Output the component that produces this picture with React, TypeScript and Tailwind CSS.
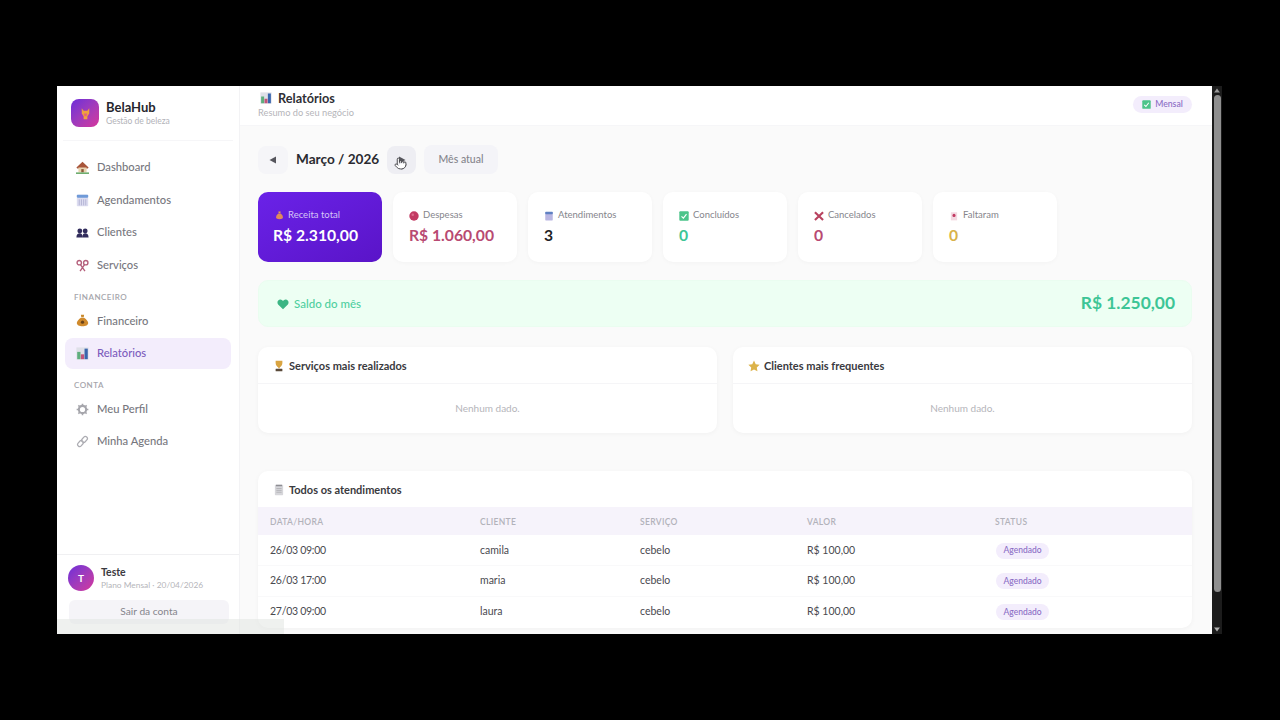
import React from 'react';
import { Pointer } from 'lucide-react';

type IconProps = { className?: string };

const HouseIcon = ({ className }: IconProps) => (
  <svg viewBox="0 0 16 16" className={className}>
    <path d="M8 1 15.500 8l-1 1.200H1.500L.5 8z" fill="#a8553a" />
    <rect x="3" y="8" width="10" height="6" fill="#e8d3b0" />
    <rect x="6.500" y="10" width="3" height="4" fill="#8a5a3a" />
    <path d="M0 14h16v2H0z" fill="#6fae6f" />
  </svg>
);

const CalendarIcon = ({ className }: IconProps) => (
  <svg viewBox="0 0 16 16" className={className}>
    <rect x="1" y="1" width="14" height="14" rx="1" fill="#dcdcf0" />
    <rect x="1" y="1" width="14" height="3.500" rx="1" fill="#6f9ad8" />
    <path d="M4 6.500V14M6.700 6.500V14M9.400 6.500V14M12 6.500V14" stroke="#a9a9cc" strokeWidth="0.900" />
  </svg>
);

const UsersEmojiIcon = ({ className }: IconProps) => (
  <svg viewBox="0 0 16 16" className={className}>
    <circle cx="4.700" cy="6" r="3" fill="#312c5c" />
    <circle cx="11.300" cy="6" r="3" fill="#312c5c" />
    <path d="M.5 14c0-3.500 1.800-5 4.200-5s3.300 1.500 3.300 5zM8 14c0-3.500.9-5 3.300-5s4.200 1.500 4.200 5z" fill="#312c5c" />
  </svg>
);

const ScissorsIcon = ({ className }: IconProps) => (
  <svg viewBox="0 0 16 16" className={className} fill="none" stroke="#b5607c" strokeWidth="1.700">
    <circle cx="4" cy="4.500" r="2.700" />
    <circle cx="12" cy="4.500" r="2.700" />
    <path d="M5.500 6.800 11 15M10.500 6.800 5 15" />
  </svg>
);

const MoneyBagIcon = ({ className }: IconProps) => (
  <svg viewBox="0 0 16 16" className={className}>
    <path d="M6 1h4L9.500 4h-3z" fill="#c98a2e" />
    <path d="M6 4.500h4c3 2 5 4.500 5 6.500 0 2.500-3 4-7 4s-7-1.500-7-4c0-2 2-4.500 5-6.500z" fill="#d08a2c" />
    <circle cx="8" cy="10" r="2" fill="#6b4318" />
  </svg>
);

const ChartIcon = ({ className }: IconProps) => (
  <svg viewBox="0 0 16 16" className={className}>
    <rect x="0.500" y="0.500" width="15" height="15" fill="#dfe0e8" />
    <rect x="1.500" y="6" width="4" height="9" fill="#5fae7d" />
    <rect x="6" y="9" width="4" height="6" fill="#c2557a" />
    <rect x="10.500" y="2" width="4" height="13" fill="#3a66ad" />
  </svg>
);

const GearIcon = ({ className }: IconProps) => (
  <svg viewBox="0 0 16 16" className={className}>
    <circle cx="8" cy="8" r="4.500" fill="none" stroke="#a6a6ac" strokeWidth="2.600" />
    <path d="M8 .8v3M8 12.200v3M.8 8h3M12.200 8h3M2.900 2.900l2.100 2.100M11 11l2.100 2.100M13.100 2.900 11 5M5 11l-2.100 2.100" stroke="#a6a6ac" strokeWidth="1.900" />
  </svg>
);

const LinkIcon = ({ className }: IconProps) => (
  <svg viewBox="0 0 16 16" className={className} fill="none" stroke="#acacb2" strokeWidth="1.500">
    <rect x="8" y="1.500" width="5" height="8" rx="2.500" transform="rotate(42 10.500 5.500)" />
    <rect x="3" y="6.500" width="5" height="8" rx="2.500" transform="rotate(42 5.500 10.500)" />
  </svg>
);

const FoxLogo = ({ className }: IconProps) => (
  <svg viewBox="0 0 16 16" className={className}>
    <path d="M4 2.500 6 5h4l2-2.500V8l-2 3v3H6v-3L4 8z" fill="#f0a33c" />
    <path d="M6 8h4l-1 3H7z" fill="#e8637a" />
  </svg>
);

const BagIcon = ({ className }: IconProps) => (
  <svg viewBox="0 0 16 16" className={className}>
    <path d="M6 1h4L9.500 4h-3z" fill="#e6a04d" />
    <path d="M6 4.500h4c3 2 4 4.500 4 6.500 0 2.500-2.500 3.500-6 3.500S2 13.500 2 11c0-2 1-4.500 4-6.500z" fill="#e08a5a" />
  </svg>
);

const RedDot = ({ className }: IconProps) => (
  <svg viewBox="0 0 16 16" className={className}>
    <circle cx="8" cy="8" r="7.500" fill="#c23a62" />
    <circle cx="6" cy="6" r="2" fill="#dd6d8d" />
  </svg>
);

const TearCalendar = ({ className }: IconProps) => (
  <svg viewBox="0 0 16 16" className={className}>
    <rect x="2" y="3" width="12" height="12" rx="1" fill="#b9b6e2" />
    <rect x="2" y="1" width="12" height="4" rx="1" fill="#5f80c2" />
  </svg>
);

const CheckBox = ({ className }: IconProps) => (
  <svg viewBox="0 0 16 16" className={className}>
    <rect x="0.500" y="0.500" width="15" height="15" rx="1.500" fill="#4cc48a" />
    <path d="M4 8.500 7 11.500 12 5" fill="none" stroke="#fff" strokeWidth="1.800" />
  </svg>
);

const CrossIcon = ({ className }: IconProps) => (
  <svg viewBox="0 0 16 16" className={className}>
    <path d="M1.500 2 14.500 14.500M14.500 2 1.500 14.500" stroke="#b8425f" strokeWidth="3.400" />
  </svg>
);

const PinIcon = ({ className }: IconProps) => (
  <svg viewBox="0 0 16 16" className={className}>
    <rect x="3" y="2" width="10" height="13" fill="#f3d9e2" />
    <circle cx="8" cy="7" r="2.500" fill="#c23a62" />
  </svg>
);

const GreenHeart = ({ className }: IconProps) => (
  <svg viewBox="0 0 16 16" className={className}>
    <path d="M8 15 1.500 8.500C-.5 6 1 2 4.500 2 6 2 7.300 3 8 4c.7-1 2-2 3.500-2C15 2 16.500 6 14.500 8.500z" fill="#3bb583" />
  </svg>
);

const TrophyIcon = ({ className }: IconProps) => (
  <svg viewBox="0 0 16 16" className={className}>
    <path d="M3.500 1h9v3c0 3-2 5-3.500 5.500V11H7V9.500C5.500 9 3.500 7 3.500 4z" fill="#d9a441" />
    <rect x="3.500" y="11.500" width="9" height="3.500" rx="0.500" fill="#5a4a3a" />
  </svg>
);

const StarIcon = ({ className }: IconProps) => (
  <svg viewBox="0 0 16 16" className={className}>
    <path d="M8 .8l2.300 4.800 5.200.7-3.800 3.600.9 5.200L8 12.600l-4.600 2.500.9-5.200L.5 6.300l5.200-.7z" fill="#dcb34a" />
  </svg>
);

const NoteIcon = ({ className }: IconProps) => (
  <svg viewBox="0 0 16 16" className={className}>
    <rect x="2.500" y="1" width="11" height="14" rx="1" fill="#d6d6da" />
    <rect x="4" y="1" width="8" height="2" fill="#8d8d92" />
    <path d="M4.500 6h7M4.500 8.500h7M4.500 11h7" stroke="#a5a5aa" strokeWidth="0.900" />
  </svg>
);

const NavItem = ({ icon, label, active }: { icon: React.ReactNode; label: string; active?: boolean }) => (
  <div
    className={`flex h-[31px] items-center gap-[8px] rounded-[8px] px-[11px] text-[11.200px] font-medium ${
      active ? 'bg-[#f3edfc] text-[#7c5cbc]' : 'text-[#77777e]'
    }`}
  >
    {icon}
    <span>{label}</span>
  </div>
);

const StatCard = ({
  icon,
  label,
  value,
  valueClass,
}: {
  icon: React.ReactNode;
  label: string;
  value: string;
  valueClass: string;
}) => (
  <div className="flex h-[70px] w-[124px] flex-col rounded-[10px] bg-white pl-[16px] pt-[17px] shadow-[0_1px_4px_rgba(0,0,0,0.03)]">
    <div className="flex h-[13px] items-center gap-[4px] text-[9.500px] text-[#85858c]">
      {icon}
      <span>{label}</span>
    </div>
    <div className={`mt-[2px] text-[15.700px] leading-[22px] font-bold ${valueClass}`}>{value}</div>
  </div>
);

const TopPanel = ({ icon, title }: { icon: React.ReactNode; title: string }) => (
  <div className="h-[86px] flex-1 rounded-[10px] bg-white shadow-[0_1px_5px_rgba(0,0,0,0.04)]">
    <div className="flex h-[37px] items-center gap-[4px] border-b border-[#f5f5f7] pl-[15px] pt-[2px] text-[11px] font-bold text-[#3a3a40]">
      {icon}
      <span>{title}</span>
    </div>
    <div className="pt-[17px] text-center text-[10px] text-[#b5b5ba]">Nenhum dado.</div>
  </div>
);

const rows = [
  { when: '26/03 09:00', client: 'camila' },
  { when: '26/03 17:00', client: 'maria' },
  { when: '27/03 09:00', client: 'laura' },
];

export default function App() {
  return (
    <div className="flex h-screen flex-col overflow-hidden bg-black pb-[86px] pl-[57px] pr-[58px] pt-[86px] font-['Lato','Noto_Sans',sans-serif]">
      <div className="relative flex h-[548px] min-h-0 bg-white">
        {/* Sidebar */}
        <aside className="flex w-[183px] shrink-0 flex-col border-r border-[#f3f3f5] bg-white">
          <div className="mx-[6px] flex h-[55px] shrink-0 items-center gap-[7px] border-b border-[#f6f6f8] pl-[8px]">
            <div className="flex h-[28px] w-[28px] items-center justify-center rounded-[8px] bg-gradient-to-br from-[#6d28d9] to-[#d6339b]">
              <FoxLogo className="h-[15px] w-[15px]" />
            </div>
            <div>
              <div className="text-[13px] leading-[15px] font-bold text-[#26262c]">BelaHub</div>
              <div className="text-[8.500px] leading-[12px] text-[#b2b2b8]">Gestão de beleza</div>
            </div>
          </div>
          <nav className="flex flex-1 flex-col gap-[1.700px] px-[8px] pt-[11px]">
            <NavItem icon={<HouseIcon className="h-[13px] w-[13px]" />} label="Dashboard" />
            <NavItem icon={<CalendarIcon className="h-[13px] w-[13px]" />} label="Agendamentos" />
            <NavItem icon={<UsersEmojiIcon className="h-[13px] w-[13px]" />} label="Clientes" />
            <NavItem icon={<ScissorsIcon className="h-[13px] w-[13px]" />} label="Serviços" />
            <div className="h-[21px] pl-[9px] pt-[8px] text-[8px] leading-[12px] font-semibold tracking-[0.06em] text-[#a5a5ab]">FINANCEIRO</div>
            <NavItem icon={<MoneyBagIcon className="h-[13px] w-[13px]" />} label="Financeiro" />
            <NavItem icon={<ChartIcon className="h-[13px] w-[13px]" />} label="Relatórios" active />
            <div className="h-[21px] pl-[9px] pt-[8px] text-[8px] leading-[12px] font-semibold tracking-[0.06em] text-[#a5a5ab]">CONTA</div>
            <NavItem icon={<GearIcon className="h-[13px] w-[13px]" />} label="Meu Perfil" />
            <NavItem icon={<LinkIcon className="h-[13px] w-[13px]" />} label="Minha Agenda" />
          </nav>
          <div className="flex h-[80px] shrink-0 flex-col border-t border-[#f0f0f2] px-[11px] pt-[10px]">
            <div className="flex items-center gap-[7px]">
              <div className="flex h-[26px] w-[26px] items-center justify-center rounded-full bg-gradient-to-br from-[#6d28d9] to-[#d6339b] text-[10px] font-bold text-white">T</div>
              <div>
                <div className="text-[10.500px] leading-[13px] font-bold text-[#3a3a40]">Teste</div>
                <div className="text-[8.400px] leading-[12px] text-[#b5b5ba]">Plano Mensal · 20/04/2026</div>
              </div>
            </div>
            <div className="ml-[1px] mt-[9px] flex h-[24px] w-[160px] items-center justify-center rounded-[6px] bg-[#f5f4f8] text-[10.200px] text-[#85858c]">Sair da conta</div>
          </div>
        </aside>

        {/* Main */}
        <main className="flex min-w-0 flex-1 flex-col overflow-hidden bg-[#fafafa]">
          <header className="flex h-[40px] shrink-0 items-center justify-between border-b border-[#f6f6f8] bg-white pl-[18px] pr-[20px]">
            <div className="pb-[3px]">
              <div className="flex items-center gap-[6px] pl-[2px] text-[12.700px] leading-[16px] font-bold text-[#2f2f35]">
                <ChartIcon className="h-[12px] w-[12px]" />
                <span>Relatórios</span>
              </div>
              <div className="text-[9.250px] leading-[13px] text-[#b5b5ba]">Resumo do seu negócio</div>
            </div>
            <div className="mb-[3px] flex h-[17px] w-[59px] items-center justify-center gap-[4px] rounded-full bg-[#f3edfc] text-[8.700px] font-medium text-[#8a6cc4]">
              <CheckBox className="h-[9px] w-[9px]" />
              <span>Mensal</span>
            </div>
          </header>

          <div className="flex flex-col pl-[18px] pr-[20px] pt-[19px]">
            {/* Month navigation */}
            <div className="flex h-[29px] items-center">
              <div className="flex h-[28px] w-[30px] items-center justify-center rounded-[8px] bg-[#f5f5f8]">
                <svg viewBox="0 0 8 8" className="h-[8px] w-[8px]"><path d="M7 .5v7L.5 4z" fill="#55555c" /></svg>
              </div>
              <div className="ml-[8px] w-[91px] text-[13.600px] font-bold whitespace-nowrap text-[#2a2a30]">Março / 2026</div>
              <div className="relative flex h-[28px] w-[29px] items-center justify-center rounded-[8px] bg-[#eeeef3]">
                <svg viewBox="0 0 8 8" className="h-[8px] w-[8px]"><path d="M1 .5v7L7.500 4z" fill="#55555c" /></svg>
                <Pointer className="absolute left-[7px] top-[11px] h-[13px] w-[13px] fill-white text-[#45454a]" strokeWidth={1.800} />
              </div>
              <div className="ml-[8px] flex h-[29px] w-[74px] items-center justify-center rounded-[8px] bg-[#f4f4f8] text-[10.500px] font-medium text-[#85858c]">Mês atual</div>
            </div>

            {/* Stat cards */}
            <div className="mt-[18px] flex gap-[11px]">
              <div className="flex h-[70px] w-[124px] flex-col rounded-[10px] bg-gradient-to-br from-[#6a22e8] to-[#5a14c8] pl-[15px] pt-[17px]">
                <div className="flex h-[13px] items-center gap-[4px] pl-[2px] text-[9.500px] text-[#d7c4f7]">
                  <BagIcon className="h-[9px] w-[9px]" />
                  <span>Receita total</span>
                </div>
                <div className="mt-[2px] text-[15.700px] leading-[22px] font-bold text-white">R$ 2.310,00</div>
              </div>
              <StatCard icon={<RedDot className="h-[10px] w-[10px]" />} label="Despesas" value="R$ 1.060,00" valueClass="text-[#b84a72]" />
              <StatCard icon={<TearCalendar className="h-[10px] w-[10px]" />} label="Atendimentos" value="3" valueClass="text-[#1f1f25]" />
              <StatCard icon={<CheckBox className="h-[10px] w-[10px]" />} label="Concluídos" value="0" valueClass="text-[#3dc596]" />
              <StatCard icon={<CrossIcon className="h-[10px] w-[10px]" />} label="Cancelados" value="0" valueClass="text-[#b84a72]" />
              <StatCard icon={<PinIcon className="h-[10px] w-[10px]" />} label="Faltaram" value="0" valueClass="text-[#d9b34a]" />
            </div>

            {/* Balance */}
            <div className="mt-[18px] flex h-[47px] items-center justify-between rounded-[10px] border border-[#eafdf0] bg-[#edfff3] pl-[18px] pr-[16px]">
              <div className="flex items-center gap-[5px] text-[11.500px] font-medium text-[#4fcf9f]">
                <GreenHeart className="h-[12px] w-[12px]" />
                <span>Saldo do mês</span>
              </div>
              <div className="text-[17.400px] font-bold text-[#3dc596]">R$ 1.250,00</div>
            </div>

            {/* Top lists */}
            <div className="mt-[20px] flex gap-[16px]">
              <TopPanel icon={<TrophyIcon className="h-[12px] w-[12px]" />} title="Serviços mais realizados" />
              <TopPanel icon={<StarIcon className="h-[12px] w-[12px]" />} title="Clientes mais frequentes" />
            </div>

            {/* Appointments */}
            <div className="mt-[38px] h-[157px] shrink-0 overflow-hidden rounded-[10px] bg-white shadow-[0_1px_5px_rgba(0,0,0,0.04)]">
              <div className="flex h-[36px] items-center gap-[4px] pl-[15px] pt-[2px] text-[11px] font-bold text-[#3a3a40]">
                <NoteIcon className="h-[12px] w-[12px]" />
                <span>Todos os atendimentos</span>
              </div>
              <table className="w-full table-fixed border-collapse">
                <thead>
                  <tr className="h-[28px] bg-[#f6f3fb] text-left text-[8.500px] tracking-[0.04em] text-[#b2b2ba]">
                    <th className="w-[222px] pl-[12px] pt-[2px] font-semibold">DATA/HORA</th>
                    <th className="w-[160px] pt-[2px] font-semibold">CLIENTE</th>
                    <th className="w-[167px] pt-[2px] font-semibold">SERVIÇO</th>
                    <th className="w-[188px] pt-[2px] font-semibold">VALOR</th>
                    <th className="pt-[2px] font-semibold">STATUS</th>
                  </tr>
                </thead>
                <tbody>
                  {rows.map((row) => (
                    <tr key={row.when} className="h-[30.500px] border-b border-[#f9f9fa] text-[10.500px] text-[#4a4a50] last:border-b-0">
                      <td className="pl-[12px] pt-[1px] tracking-[-0.025em]">{row.when}</td>
                      <td className="pt-[1px]">{row.client}</td>
                      <td className="pt-[1px]">cebelo</td>
                      <td className="pt-[1px]">R$ 100,00</td>
                      <td className="pt-[1px]">
                        <span className="ml-[1px] inline-flex h-[16px] w-[53px] items-center justify-center rounded-full bg-[#f3edfc] text-[8.500px] font-medium text-[#8a6cc4]">Agendado</span>
                      </td>
                    </tr>
                  ))}
                </tbody>
              </table>
            </div>
          </div>
        </main>

        {/* Scrollbar */}
        <div className="flex w-[10px] shrink-0 flex-col items-center bg-[#1c1c1c]">
          <svg viewBox="0 0 8 6" className="mt-[2px] h-[5px] w-[8px]"><path d="M4 .5 7.500 5.500H.5z" fill="#9a9a9a" /></svg>
          <div className="mt-[2px] h-[497px] w-[7px] rounded-full bg-[#8f8f8f]" />
          <svg viewBox="0 0 8 6" className="mb-[2px] mt-auto h-[5px] w-[8px]"><path d="M4 5.500 7.500 .5H.5z" fill="#b0b0b0" /></svg>
        </div>

        {/* Fading toast left over the page corner */}
        <div className="absolute bottom-0 left-0 h-[15px] w-[227px] bg-[#dfe3df]/50" />
      </div>
    </div>
  );
}
